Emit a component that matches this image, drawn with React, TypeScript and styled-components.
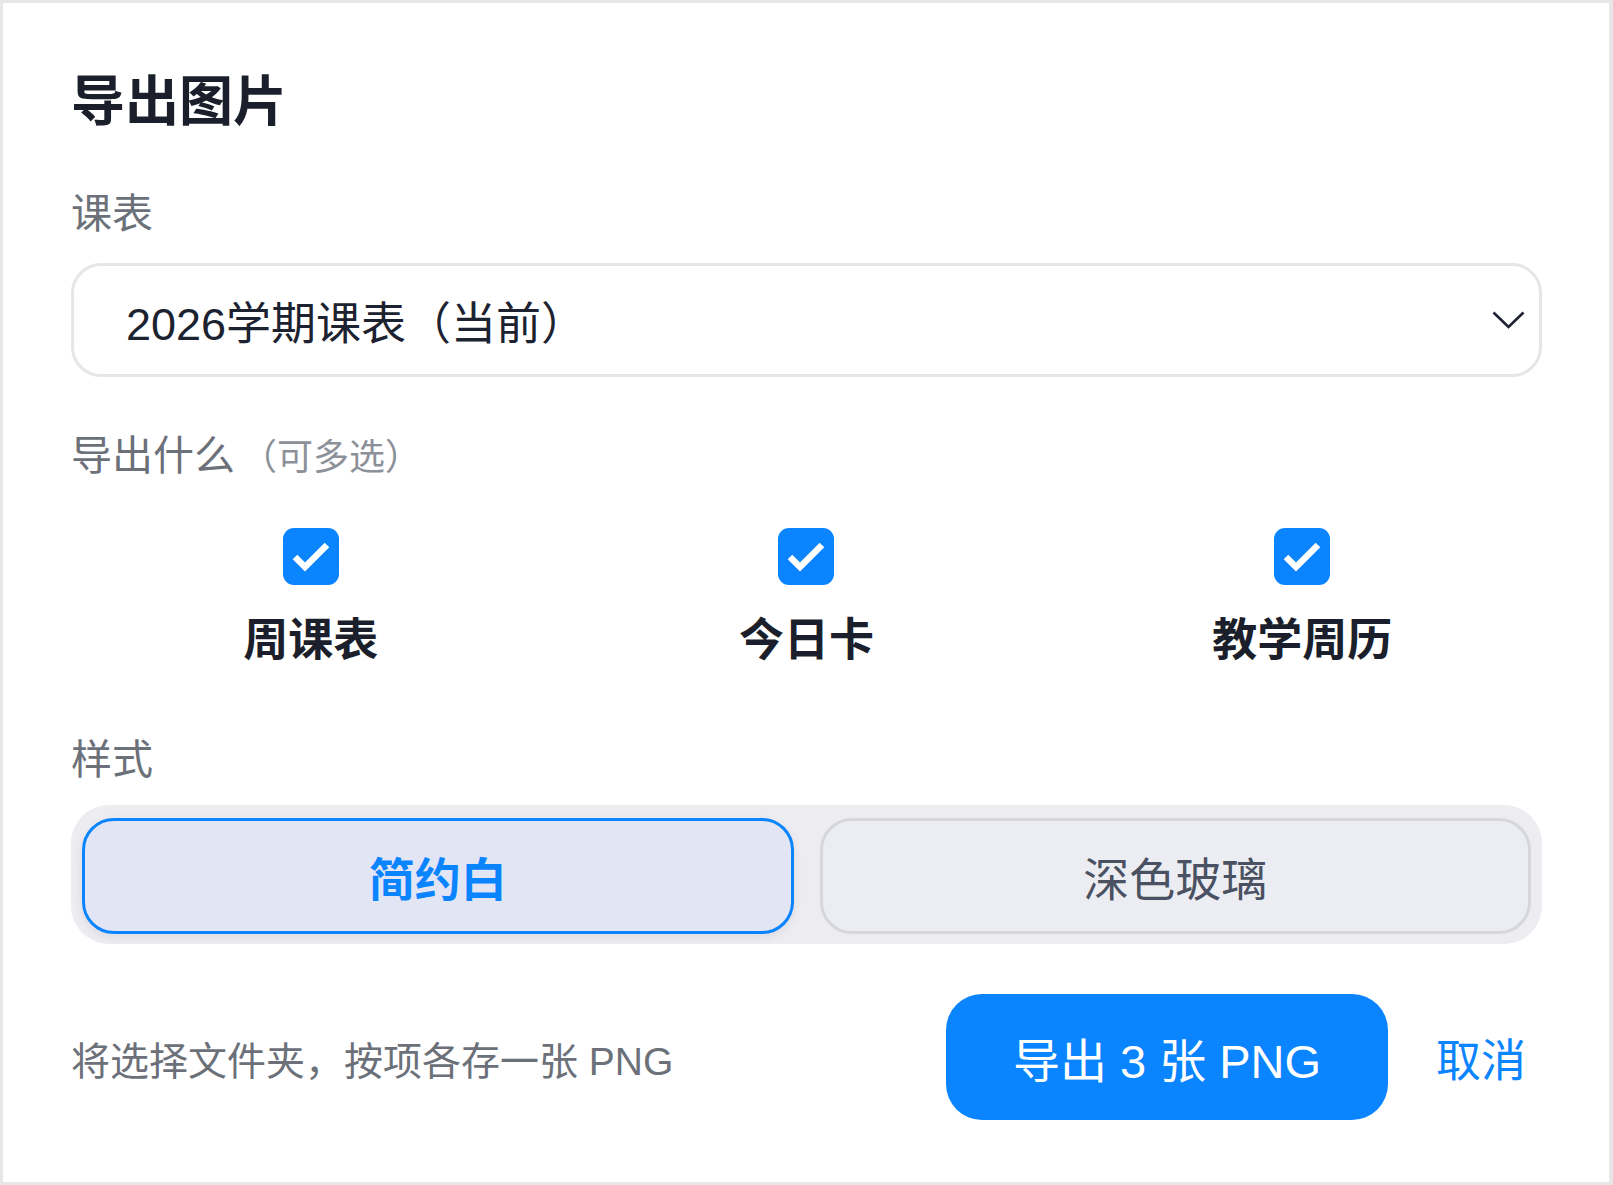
import React, { useState } from "react";
import styled, { createGlobalStyle } from "styled-components";

const GlobalStyle = createGlobalStyle`
  html, body { margin: 0; padding: 0; }
  body {
    background: #e7e7ea;
    font-family: "Liberation Sans", "Noto Sans CJK SC", sans-serif;
  }
  * { box-sizing: border-box; }
`;

const Frame = styled.div`
  padding: 3px 4px 3px 3px;
`;

const Card = styled.div`
  background: #ffffff;
  height: 1179px;
  padding: 0 67px 0 68px;
  display: flex;
  flex-direction: column;
`;

const Title = styled.h1`
  margin: 72px 0 0;
  font-size: 54px;
  line-height: 1;
  font-weight: 700;
  color: #1b1f2b;
`;

const FieldLabel = styled.div<{ $gap: number }>`
  margin-top: ${(p) => p.$gap}px;
  font-size: 41px;
  line-height: 1;
  color: #6b7079;
  display: flex;
  align-items: baseline;
`;

const Hint = styled.span`
  margin-left: 6px;
  font-size: 36px;
  color: #8c9099;
`;

const Select = styled.div`
  margin-top: 28px;
  height: 114px;
  border: 3px solid #e6e6e8;
  border-radius: 30px;
  padding: 0 14px 0 52px;
  display: flex;
  align-items: center;
  justify-content: space-between;
  font-size: 45px;
  color: #1c2230;
`;

const Chevron = styled.svg`
  width: 33px;
  height: 18px;
  flex: none;
`;

const OptionGrid = styled.div`
  margin-top: 51px;
  display: grid;
  grid-template-columns: repeat(3, 1fr);
  column-gap: 16px;
`;

const Option = styled.label`
  display: flex;
  flex-direction: column;
  align-items: center;
  cursor: pointer;
`;

const CheckBox = styled.span<{ $on: boolean }>`
  width: 56px;
  height: 57px;
  border-radius: 11px;
  background: ${(p) => (p.$on ? "#0a84ff" : "#ffffff")};
  border: ${(p) => (p.$on ? "none" : "3px solid #c7c9cf")};
  display: flex;
  align-items: center;
  justify-content: center;
`;

const OptionText = styled.span`
  margin-top: 33px;
  font-size: 45px;
  line-height: 1;
  font-weight: 700;
  color: #1b1f2b;
`;

const Segmented = styled.div`
  margin-top: 24px;
  height: 139px;
  padding: 13px 11px 10px;
  background: #ececf1;
  border-radius: 38px;
  display: grid;
  grid-template-columns: 1fr 1fr;
  column-gap: 26px;
`;

const Segment = styled.button<{ $active: boolean }>`
  height: 116px;
  border-radius: 32px;
  border: 3px solid ${(p) => (p.$active ? "#0a84ff" : "#d6d7db")};
  background: ${(p) => (p.$active ? "#e2e6f4" : "#ecedf2")};
  box-shadow: ${(p) => (p.$active ? "0 3px 10px rgba(20, 30, 60, 0.08)" : "none")};
  font-family: "Liberation Sans", "Noto Sans CJK SC", sans-serif;
  font-size: 46px;
  font-weight: ${(p) => (p.$active ? 700 : 400)};
  color: ${(p) => (p.$active ? "#0a84ff" : "#4a5163")};
  cursor: pointer;
`;

const Footer = styled.div`
  margin-top: 50px;
  display: flex;
  align-items: center;
`;

const FooterHint = styled.div`
  flex: 1;
  font-size: 39px;
  color: #6b7079;
  padding-top: 2px;
`;

const PrimaryButton = styled.button`
  width: 442px;
  height: 126px;
  border: none;
  border-radius: 36px;
  background: #0a84ff;
  color: #ffffff;
  font-family: "Liberation Sans", "Noto Sans CJK SC", sans-serif;
  font-size: 47px;
  cursor: pointer;
`;

const TextButton = styled.button`
  margin-left: 32px;
  padding: 0 16px;
  border: none;
  background: none;
  color: #0a84ff;
  font-family: "Liberation Sans", "Noto Sans CJK SC", sans-serif;
  font-size: 45px;
  cursor: pointer;
`;

const CheckMark = () => (
  <svg width="56" height="57" viewBox="0 0 56 57">
    <polyline
      points="12,29 22,39 44,17"
      fill="none"
      stroke="#ffffff"
      strokeWidth="6.5"
      strokeLinecap="butt"
      strokeLinejoin="miter"
    />
  </svg>
);

const options = ["周课表", "今日卡", "教学周历"];
const styles = ["简约白", "深色玻璃"];

export default function App() {
  const [checked, setChecked] = useState<boolean[]>([true, true, true]);
  const [style, setStyle] = useState(0);
  const count = checked.filter(Boolean).length;

  return (
    <Frame>
      <GlobalStyle />
      <Card>
        <Title>导出图片</Title>

        <FieldLabel $gap={65}>课表</FieldLabel>
        <Select>
          <span>2026学期课表（当前）</span>
          <Chevron viewBox="0 0 33 18">
            <polyline
              points="1.5,1.5 16.5,16 31.5,1.5"
              fill="none"
              stroke="#1c2230"
              strokeWidth="2.6"
            />
          </Chevron>
        </Select>

        <FieldLabel $gap={59}>
          导出什么<Hint>（可多选）</Hint>
        </FieldLabel>
        <OptionGrid>
          {options.map((o, i) => (
            <Option
              key={o}
              onClick={() =>
                setChecked((c) => c.map((v, j) => (j === i ? !v : v)))
              }
            >
              <CheckBox $on={checked[i]}>{checked[i] && <CheckMark />}</CheckBox>
              <OptionText>{o}</OptionText>
            </Option>
          ))}
        </OptionGrid>

        <FieldLabel $gap={77}>样式</FieldLabel>
        <Segmented>
          {styles.map((s, i) => (
            <Segment key={s} $active={style === i} onClick={() => setStyle(i)}>
              {s}
            </Segment>
          ))}
        </Segmented>

        <Footer>
          <FooterHint>将选择文件夹，按项各存一张 PNG</FooterHint>
          <PrimaryButton>导出 {count} 张 PNG</PrimaryButton>
          <TextButton>取消</TextButton>
        </Footer>
      </Card>
    </Frame>
  );
}
